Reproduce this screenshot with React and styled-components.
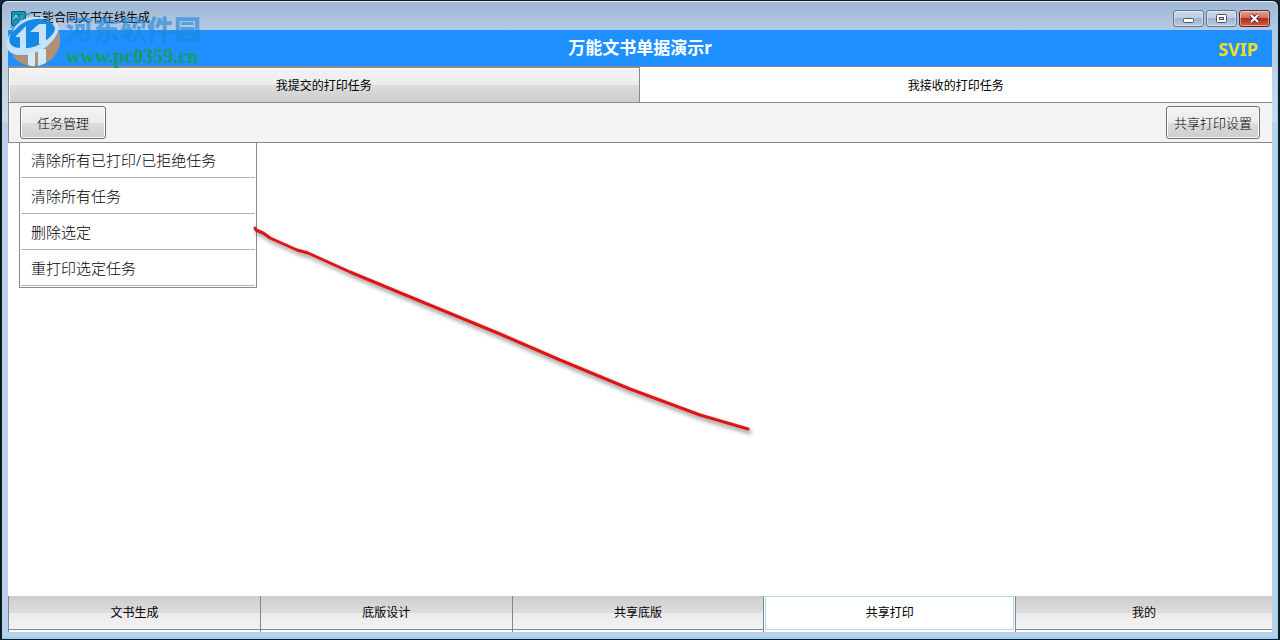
import React, { useState } from 'react'
import styled, { createGlobalStyle } from 'styled-components'

const GlobalStyle = createGlobalStyle`
  * {
    box-sizing: border-box;
  }
  body {
    margin: 0;
    background: #1b2a33;
    font-family: 'Noto Sans', 'Noto Sans CJK SC', sans-serif;
    font-size: 12px;
    font-weight: 300;
    color: #000;
  }
  button {
    font-family: inherit;
    font-weight: inherit;
    color: inherit;
    padding: 0;
  }
`

const Window = styled.div`
  position: relative;
  display: flex;
  flex-direction: column;
  min-height: 100vh;
  padding: 0 6px 7px;
  border: 2px solid #101a22;
  border-width: 1px 2px;
  border-radius: 7px 7px 0 0;
  background: linear-gradient(to bottom, #9fb7d5 0, #b3c8e2 28px, #cbdcf0 120px, #b9d1ea 122px);
  box-shadow: inset 0 1px 0 #e6eef7, inset -1px -2px 0 #8fd3f0;
`

const TitleBar = styled.header`
  display: flex;
  justify-content: space-between;
  align-items: center;
  height: 29px;
  padding: 5px 2px 0 3px;
`

const AppName = styled.div`
  display: flex;
  align-items: center;
  gap: 4px;
  line-height: 18px;
  font-weight: 400;
`

const WindowButtons = styled.div`
  display: flex;
  gap: 2px;
`

const WindowButton = styled.button`
  display: flex;
  align-items: center;
  justify-content: center;
  width: 31px;
  height: 17px;
  border: 1px solid ${(p) => (p.$close ? '#5c2420' : '#62748c')};
  border-radius: 3px;
  background: ${(p) =>
    p.$close
      ? 'linear-gradient(#e0a295 0, #cf6d5c 48%, #b62f1b 50%, #cc5c40 100%)'
      : 'linear-gradient(#cbd9ea 0, #bccde2 48%, #9eb4cf 50%, #b5cae2 100%)'};
  box-shadow: inset 0 0 0 1px rgba(255, 255, 255, 0.45);
`

const Banner = styled.div`
  display: grid;
  grid-template-columns: 1fr auto 1fr;
  align-items: center;
  height: 37px;
  border-bottom: 1px solid #8a8a8a;
  background: #1e90ff;
`

const BannerTitle = styled.h1`
  grid-column: 2;
  margin: 0;
  font-size: 17px;
  line-height: 24px;
  font-weight: bold;
  color: #fff;
`

const Badge = styled.span`
  justify-self: end;
  padding: 2px 14px 0 0;
  font: bold 18px/24px 'Noto Sans', sans-serif;
  color: #f0dc1e;
`

const Tabs = styled.div`
  display: grid;
  grid-template-columns: calc(50% - 1px) 1fr;
  height: 36px;
  border-bottom: 1px solid #8a8a8a;
  border-left: 1px solid #8a8a8a;
  background: #fff;
`

const Tab = styled.button`
  border: 0;
  ${(p) =>
    p.$active
      ? 'background: #fff;'
      : `
    border-top: 1px solid #8a8a8a;
    border-right: 1px solid #8a8a8a;
    background: linear-gradient(#f3f3f3 0, #ebebeb 50%, #dddddd 51%, #cdcdcd 100%);
    box-shadow: inset 1px 1px 0 #fff;
  `}
  font-size: 12px;
  font-weight: 400;
`

const Toolbar = styled.div`
  position: relative;
  display: flex;
  justify-content: space-between;
  align-items: center;
  height: 40px;
  padding: 0 12px 0 11px;
  border-left: 1px solid #8a8a8a;
  border-bottom: 1px solid #8a8a8a;
  background: #f3f3f3;
`

const ToolButton = styled.button`
  height: 33px;
  padding: 0 ${(p) => (p.$wide ? 16 : 7)}px;
  border: 1px solid #707070;
  border-radius: 3px;
  background: linear-gradient(#f3f3f3 0, #ebebeb 50%, #dddddd 51%, #cdcdcd 100%);
  box-shadow: inset 0 0 0 1px #fcfcfc;
  font-size: 13px;
`

const Menu = styled.ul`
  position: absolute;
  top: 39px;
  left: 10px;
  width: 238px;
  margin: 0;
  padding: 0 1px 1px;
  border: 1px solid #8a8a8a;
  background: #fff;
  list-style: none;

  li:first-child button {
    height: 35px;
  }
`

const MenuItem = styled.button`
  display: block;
  width: 100%;
  height: 36px;
  padding-left: 10px;
  border: 0;
  border-bottom: 1px solid #b4b4b4;
  background: #fff;
  font-size: 15px;
  line-height: 20px;
  text-align: left;
`

const Content = styled.main`
  flex: 1;
  background: #fff;
`

const BottomNav = styled.nav`
  display: grid;
  grid-template-columns: repeat(4, calc(20% - 1px)) 1fr;
  height: 36px;
  background: #fff;
`

const NavButton = styled.button`
  border: 0;
  border-left: 1px solid #7f8794;
  background: ${(p) =>
    p.$active
      ? '#fff'
      : 'linear-gradient(#cdcdcd 0, #dddddd 46%, #ebebeb 48%, #f3f3f3 33px, #7f8794 33px, #7f8794 34px, #fff 34px)'};
  padding: ${(p) => (p.$active ? '0 1px 2px' : '0 0 4px')};
  font-size: 12px;
  font-weight: 400;
`

const ActiveFrame = styled.span`
  display: flex;
  align-items: center;
  justify-content: center;
  height: 34px;
  padding-bottom: 2px;
  border: 1px solid #add8e6;
`

const Annotation = styled.svg`
  position: absolute;
  top: 220px;
  left: 248px;
  pointer-events: none;
`

const Watermark = styled.div`
  position: absolute;
  top: 9px;
  left: 2px;
  display: flex;
  gap: 6px;
  pointer-events: none;
`

const WatermarkText = styled.div`
  padding-top: 3px;
`

const SiteName = styled.div`
  font: 900 27px/32px 'Noto Sans CJK SC', sans-serif;
  color: #1d86dc;
  opacity: 0.6;
`

const SiteUrl = styled.div`
  font: bold 20px/22px 'Liberation Serif', serif;
  color: #1c9a62;
`

const AppIcon = () => (
  <svg width='15' height='15' viewBox='0 0 15 15'>
    <rect x='0.5' y='0.5' width='14' height='14' rx='1' fill='#087f9c' stroke='#075d75' />
    <path d='M2 12V3M13 12V2M2 2h11' stroke='#2bb3c9' fill='none' />
    <path d='M3 8l2-4 2 4M9 5h3M9 7h3M4 11h2M8 11l2-2 2 2' stroke='#c9f4f8' fill='none' />
  </svg>
)

const WatermarkLogo = () => (
  <svg width='56' height='60' viewBox='4 10 56 60'>
    <path d='M10 28C14 17 24 11 36 13c-8 1-15 5-21 14z' fill='#2a83b8' opacity='0.65' />
    <path d='M9 38C10 22 32 12 50 22c5 4 6 8 5 12-5 14-25 21-40 16-4-2-6-6-6-12z' fill='#1688e6' />
    <path d='M59 31c5 19-7 35-27 35-10-1-16-5-20-12 20 5 36-3 47-23z' fill='#ae9273' />
    <path
      d='M11 33c-9 11-5 23 12 22 15 0 31-10 36-26-1-6-4-9-8-10 6 6 5 12 0 17-8 9-20 13-30 12-11 0-14-6-10-15z'
      fill='#c5e2fa'
    />
    <path d='M12 32C18 19 34 12 50 20c-13-3-26 0-33 8z' fill='#c5e2fa' />
    <path d='M16 36l10-10v24h-6V37h-4z' fill='#c5e2fa' />
    <path d='M28 52h7v14c-3 0-5 0-7-1zM38 49h8v14c-3 1-5 2-8 3z' fill='#d3e8fa' />
    <path d='M30 32l9-8h7v20h-7V32z' fill='#c5e2fa' />
  </svg>
)

const MENU_ITEMS = ['清除所有已打印/已拒绝任务', '清除所有任务', '删除选定', '重打印选定任务']
const NAV_ITEMS = ['文书生成', '底版设计', '共享底版', '共享打印', '我的']
const TABS = ['我提交的打印任务', '我接收的打印任务']

const App = () => {
  const [tab, setTab] = useState(1)
  const [nav, setNav] = useState(3)
  const [menuOpen, setMenuOpen] = useState(true)

  return (
    <>
      <GlobalStyle />
      <Window>
        <TitleBar>
          <AppName>
            <AppIcon />
            万能合同文书在线生成
          </AppName>
          <WindowButtons>
            <WindowButton aria-label='最小化'>
              <svg width='13' height='11'>
                <rect x='1.5' y='5.5' width='10' height='4' rx='1' fill='#fff' stroke='#4d5562' />
              </svg>
            </WindowButton>
            <WindowButton aria-label='最大化'>
              <svg width='11' height='9'>
                <rect x='0.5' y='0.5' width='10' height='8' rx='1' fill='#fff' stroke='#4d5562' />
                <rect x='3.5' y='3.5' width='4' height='2' fill='#b8cbe2' stroke='#4d5562' />
              </svg>
            </WindowButton>
            <WindowButton $close aria-label='关闭'>
              <svg width='13' height='11' viewBox='0 0 13 11'>
                <path d='M3 2l7 7M10 2l-7 7' stroke='#5c3038' strokeWidth='4' />
                <path d='M3 2l7 7M10 2l-7 7' stroke='#fff' strokeWidth='2' />
              </svg>
            </WindowButton>
          </WindowButtons>
        </TitleBar>

        <Banner>
          <BannerTitle>万能文书单据演示r</BannerTitle>
          <Badge>SVIP</Badge>
        </Banner>

        <Tabs>
          {TABS.map((label, i) => (
            <Tab key={label} $active={tab === i} onClick={() => setTab(i)}>
              {label}
            </Tab>
          ))}
        </Tabs>

        <Toolbar>
          <ToolButton $wide onClick={() => setMenuOpen(!menuOpen)}>
            任务管理
          </ToolButton>
          <ToolButton>共享打印设置</ToolButton>
          {menuOpen && (
            <Menu>
              {MENU_ITEMS.map((item) => (
                <li key={item}>
                  <MenuItem onClick={() => setMenuOpen(false)}>{item}</MenuItem>
                </li>
              ))}
            </Menu>
          )}
        </Toolbar>

        <Content />

        <BottomNav>
          {NAV_ITEMS.map((label, i) => (
            <NavButton key={label} $active={nav === i} onClick={() => setNav(i)}>
              {nav === i ? <ActiveFrame>{label}</ActiveFrame> : label}
            </NavButton>
          ))}
        </BottomNav>

        <Watermark>
          <WatermarkLogo />
          <WatermarkText>
            <SiteName>河东软件园</SiteName>
            <SiteUrl>www.pc0359.cn</SiteUrl>
          </WatermarkText>
        </Watermark>

        <Annotation width='520' height='230' viewBox='250 221 520 230'>
          <defs>
            <filter id='lineShadow' x='-5%' y='-10%' width='110%' height='120%'>
              <feDropShadow dx='2' dy='3' stdDeviation='2' floodColor='#000' floodOpacity='0.5' />
            </filter>
          </defs>
          <path
            d='M255 228l1 2 7 3 7 5 27 12 11 3 42 19 53 22 97 40 60 26 70 29 70 26 48 14'
            fill='none'
            stroke='#dc1414'
            strokeWidth='3'
            strokeLinecap='round'
            strokeLinejoin='round'
            filter='url(#lineShadow)'
          />
        </Annotation>
      </Window>
    </>
  )
}

export default App
